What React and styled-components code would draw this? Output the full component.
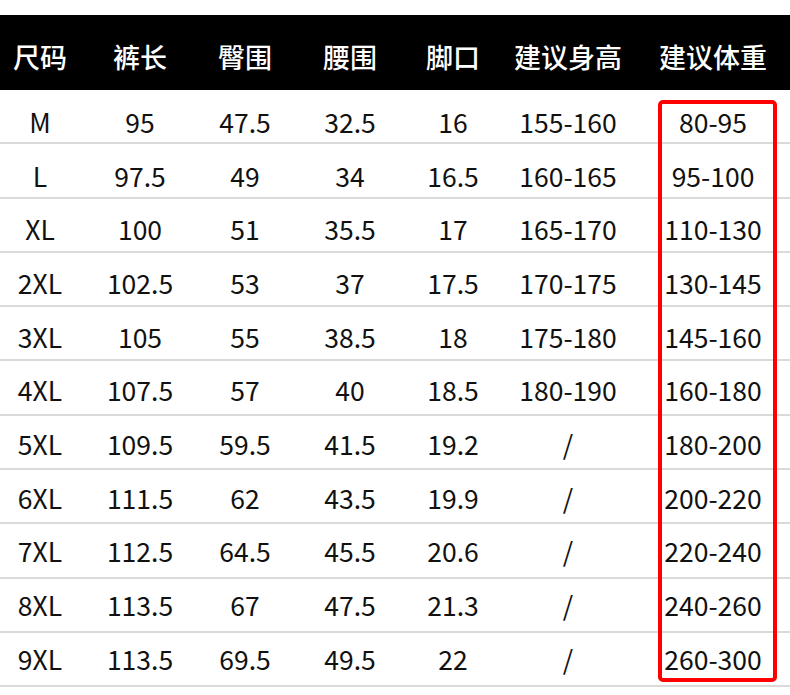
import React from 'react'
import styled, { createGlobalStyle } from 'styled-components'

const GlobalStyle = createGlobalStyle`
    html, body {
        margin: 0;
        padding: 0;
        background: #fff;
    }
    body {
        font-family: "Noto Sans CJK SC", "Noto Sans", sans-serif;
    }
`

const COLS = '80px 120px 90px 120px 86px 144px 146px'

// whole chart
const Chart = styled.div`
    width: 790px;
    height: 695px;
    padding-top: 15px;
    box-sizing: border-box;
    background: #fff;
`

const Header = styled.div`
    display: grid;
    grid-template-columns: ${COLS};
    align-items: center;
    height: 75px;
    background: #000;
    color: #fff;
`

const HeadCell = styled.div`
    text-align: center;
    font-size: 27px;
    font-weight: 500;
    line-height: 1;
    padding-top: 8px;
`

const Body = styled.div`
    position: relative;
`

// text drifts up a little row by row in the original chart
const Row = styled.div`
    display: grid;
    grid-template-columns: ${COLS};
    align-items: center;
    height: 54.3px;
    box-sizing: border-box;
    border-bottom: 2px solid #dadada;
    color: #111;
    padding-top: ${p => 12 - p.$index * 1.2}px;
`

const Cell = styled.div`
    text-align: center;
    font-size: 26.5px;
    line-height: 1;
`

// red highlight around the weight column
const Highlight = styled.div`
    position: absolute;
    left: 658px;
    top: 10px;
    width: 119px;
    height: 582px;
    box-sizing: border-box;
    border: 4px solid #ff0000;
    border-radius: 5px;
    pointer-events: none;
`

const heads = ['尺码', '裤长', '臀围', '腰围', '脚口', '建议身高', '建议体重']

const rows = [
    ['M', '95', '47.5', '32.5', '16', '155-160', '80-95'],
    ['L', '97.5', '49', '34', '16.5', '160-165', '95-100'],
    ['XL', '100', '51', '35.5', '17', '165-170', '110-130'],
    ['2XL', '102.5', '53', '37', '17.5', '170-175', '130-145'],
    ['3XL', '105', '55', '38.5', '18', '175-180', '145-160'],
    ['4XL', '107.5', '57', '40', '18.5', '180-190', '160-180'],
    ['5XL', '109.5', '59.5', '41.5', '19.2', '/', '180-200'],
    ['6XL', '111.5', '62', '43.5', '19.9', '/', '200-220'],
    ['7XL', '112.5', '64.5', '45.5', '20.6', '/', '220-240'],
    ['8XL', '113.5', '67', '47.5', '21.3', '/', '240-260'],
    ['9XL', '113.5', '69.5', '49.5', '22', '/', '260-300'],
]

const App = () => (
    <>
        <GlobalStyle />
        <Chart>
            <Header>
                {heads.map(h => <HeadCell key={h}>{h}</HeadCell>)}
            </Header>
            <Body>
                {rows.map((r, idx) => (
                    <Row key={r[0]} $index={idx}>
                        {r.map((v, i) => <Cell key={i}>{v}</Cell>)}
                    </Row>
                ))}
                <Highlight />
            </Body>
        </Chart>
    </>
)

export default App
